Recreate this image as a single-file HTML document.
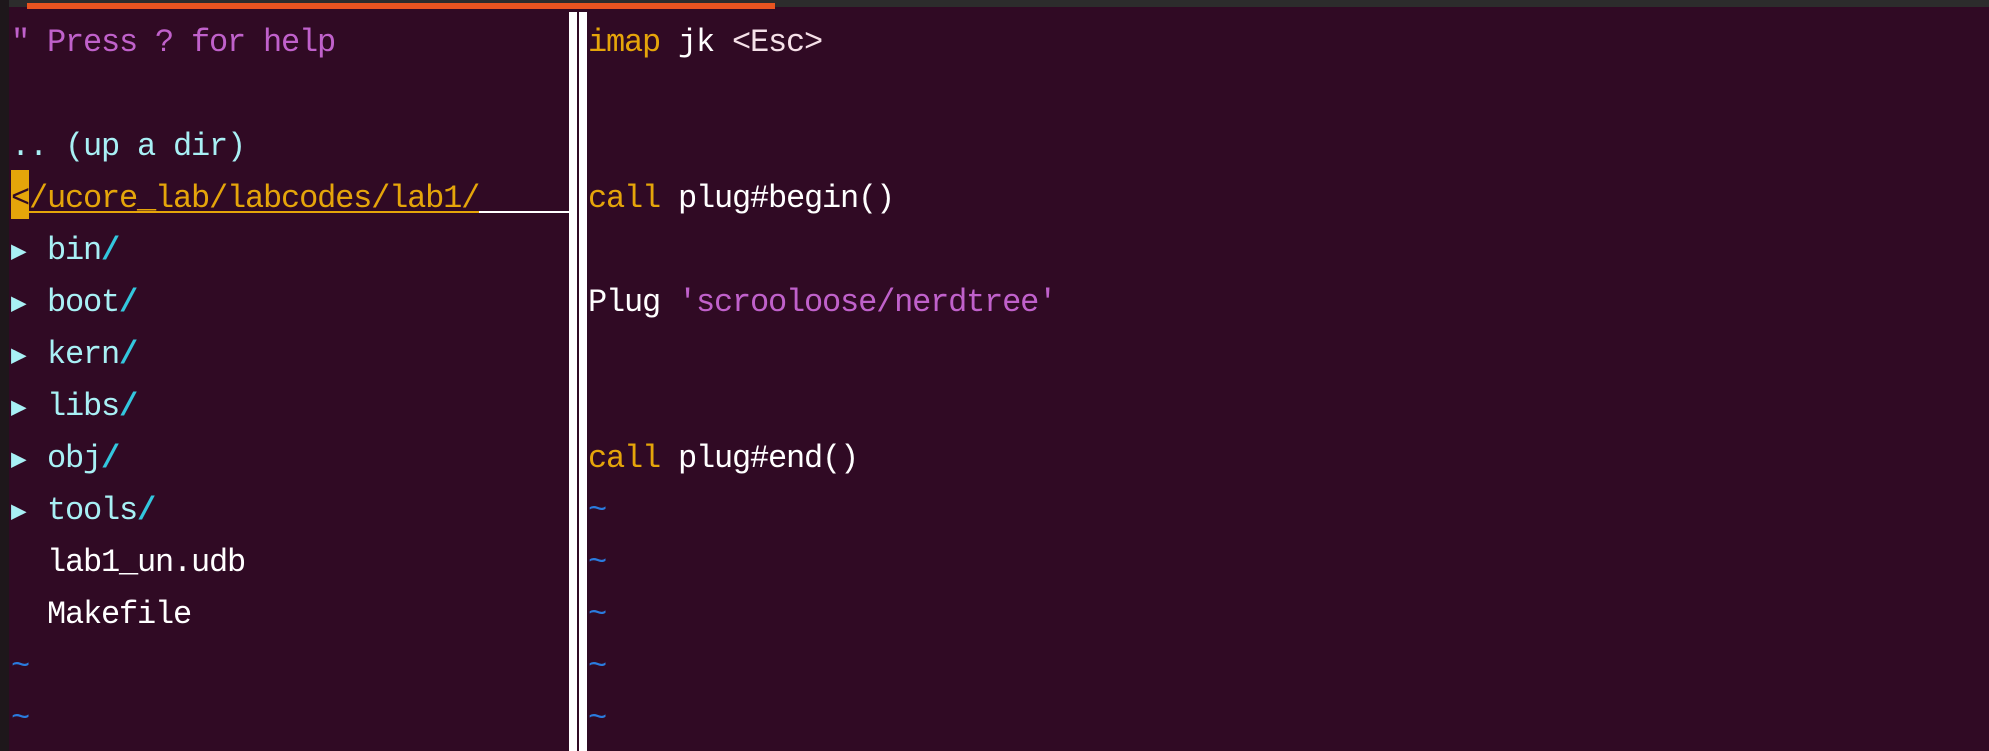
<!DOCTYPE html>
<html><head><meta charset="utf-8"><style>
html,body{margin:0;padding:0;}
body{width:1989px;height:751px;background:#300a24;position:relative;overflow:hidden;font-family:"Liberation Mono",monospace;font-size:32px;letter-spacing:-1.2px;}
.r{position:absolute;height:52px;line-height:54px;white-space:pre;}
.y{color:#e5a50a}.w{color:#ffffff}.p{color:#c061cb}.c{color:#a8f0f5}.s{color:#33c7de;font-weight:bold}.t{color:#2a7bde}
.tri{font-size:26px;letter-spacing:0;display:inline-block;width:18px}
</style></head><body>
<div style="position:absolute;left:0;top:0;width:1989px;height:7px;background:#2c2c2c"></div>
<div style="position:absolute;left:27px;top:3px;width:748px;height:6px;background:#e95420"></div>
<div style="position:absolute;left:0;top:0;width:9px;height:751px;background:#1e171b"></div>
<div style="position:absolute;left:569px;top:12px;width:8px;height:739px;background:#fff"></div>
<div style="position:absolute;left:579px;top:12px;width:8px;height:739px;background:#fff"></div>
<div style="position:absolute;left:11px;top:170px;width:18px;height:49px;background:#e5a50a"></div>
<div style="position:absolute;left:29px;top:211px;width:450px;height:2px;background:#e5a50a"></div>
<div style="position:absolute;left:479px;top:211px;width:90px;height:2px;background:#fff"></div>

<div class="r p" style="left:11px;top:16px">" Press ? for help</div>
<div class="r c" style="left:11px;top:120px">.. (up a dir)</div>
<div class="r y" style="left:11px;top:172px"><span style="color:#300a24">&lt;</span>/ucore_lab/labcodes/lab1/</div>
<div class="r" style="left:11px;top:224px"><span class="c"><span class="tri">▶</span> bin</span><span class="s">/</span></div>
<div class="r" style="left:11px;top:276px"><span class="c"><span class="tri">▶</span> boot</span><span class="s">/</span></div>
<div class="r" style="left:11px;top:328px"><span class="c"><span class="tri">▶</span> kern</span><span class="s">/</span></div>
<div class="r" style="left:11px;top:380px"><span class="c"><span class="tri">▶</span> libs</span><span class="s">/</span></div>
<div class="r" style="left:11px;top:432px"><span class="c"><span class="tri">▶</span> obj</span><span class="s">/</span></div>
<div class="r" style="left:11px;top:484px"><span class="c"><span class="tri">▶</span> tools</span><span class="s">/</span></div>
<div class="r w" style="left:11px;top:536px">  lab1_un.udb</div>
<div class="r w" style="left:11px;top:588px">  Makefile</div>
<div class="r t" style="left:11px;top:640px">~</div>
<div class="r t" style="left:11px;top:692px">~</div>

<div class="r" style="left:588px;top:16px"><span class="y">imap</span><span class="w"> jk </span><span style="color:#f5e0e8">&lt;Esc&gt;</span></div>
<div class="r" style="left:588px;top:172px"><span class="y">call</span><span class="w"> plug#begin()</span></div>
<div class="r" style="left:588px;top:276px"><span class="w">Plug </span><span class="p">'scrooloose/nerdtree'</span></div>
<div class="r" style="left:588px;top:432px"><span class="y">call</span><span class="w"> plug#end()</span></div>
<div class="r t" style="left:588px;top:484px">~</div>
<div class="r t" style="left:588px;top:536px">~</div>
<div class="r t" style="left:588px;top:588px">~</div>
<div class="r t" style="left:588px;top:640px">~</div>
<div class="r t" style="left:588px;top:692px">~</div>
</body></html>
